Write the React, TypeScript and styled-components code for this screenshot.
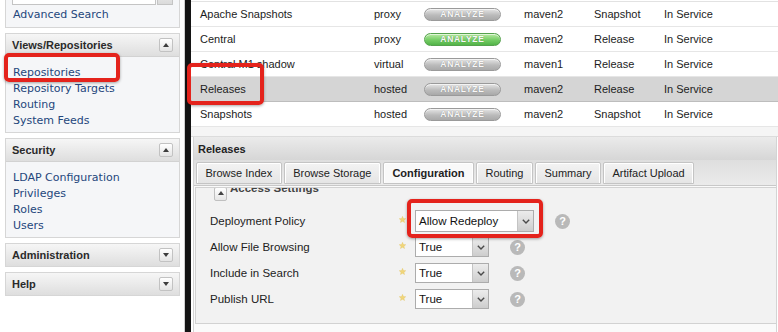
import React from "react";
import styled, { createGlobalStyle, css } from "styled-components";

const GlobalStyle = createGlobalStyle`
  html, body { margin: 0; padding: 0; background: #fff; }
  body { font-family: "Liberation Sans", Arial, sans-serif; }
  * { box-sizing: border-box; }
`;

const Page = styled.div`
  position: relative;
  display: flex;
  width: 778px;
  height: 332px;
  overflow: hidden;
  background: #fff;
`;

/* ---------- Sidebar ---------- */
const Sidebar = styled.aside`
  width: 185px;
  flex: none;
  border-right: 1px solid #cfcfcf;
  background: #fff;
  overflow: hidden;
  padding: 0 4px 0 5px;
`;

const SidebarStack = styled.div`
  display: flex;
  flex-direction: column;
  gap: 5px;
  margin-top: -22px;
`;

const Panel = styled.section`
  border: 1px solid #d6d6d6;
  background: #f5f6f8;
`;

const SearchPanel = styled(Panel)`
  padding: 8px 0 4px 6px;
  display: flex;
  flex-direction: column;
  gap: 2px;
`;

const SearchRow = styled.div`
  display: flex;
  gap: 1px;
`;

const SearchInput = styled.div`
  width: 144px;
  height: 18px;
  background: #fff;
  border: 1px solid #c4c4c4;
`;

const SearchButton = styled.div`
  width: 16px;
  height: 18px;
  border: 1px solid #c4c4c4;
  background: linear-gradient(#f2f2f2, #dadada);
`;

const PanelHeader = styled.div<{ $open?: boolean }>`
  height: ${(p) => (p.$open ? 23 : 22)}px;
  display: flex;
  align-items: center;
  justify-content: space-between;
  padding: 0 6px;
  background: linear-gradient(#f6f6f6, #dedede);
  ${(p) =>
    p.$open &&
    css`
      border-bottom: 1px solid #d2d2d2;
    `}
  font: bold 11px "Liberation Sans", Arial, sans-serif;
  color: #2a2a2a;
`;

const Toggle = styled.span<{ $dir: "up" | "down" }>`
  width: 14px;
  height: 14px;
  border: 1px solid #c2c2c2;
  border-radius: 2px;
  background: linear-gradient(#ffffff, #e4e4e4);
  display: grid;
  place-items: center;
  &::after {
    content: "";
    width: 0;
    height: 0;
    border-left: 3.5px solid transparent;
    border-right: 3.5px solid transparent;
    ${(p) =>
      p.$dir === "up"
        ? css`
            border-bottom: 4px solid #3d3d3d;
          `
        : css`
            border-top: 4px solid #3d3d3d;
          `}
  }
`;

const PanelBody = styled.div`
  padding: 8px 0 3px 0;
  display: flex;
  flex-direction: column;
`;

const NavLink = styled.a`
  display: block;
  padding-left: 7px;
  font: 11px "DejaVu Sans", Verdana, sans-serif;
  line-height: 16px;
  color: #24467c;
  text-decoration: none;
`;

const SearchLink = styled(NavLink)`
  padding-left: 1px;
`;

/* ---------- Divider ---------- */
const Divider = styled.div`
  width: 6px;
  flex: none;
  background: #141414;
`;

/* ---------- Main ---------- */
const Main = styled.main`
  flex: 1;
  min-width: 0;
  display: flex;
  flex-direction: column;
  background: #fff;
`;

const RepoTable = styled.div`
  margin-top: 1px;
  border-top: 1px solid #e2e2e2;
`;

const RepoRow = styled.div<{ $selected?: boolean }>`
  display: grid;
  grid-template-columns: 174px 50px 100px 70px 70px 1fr;
  align-items: center;
  height: 25px;
  padding-left: 9px;
  border-bottom: 1px solid ${(p) => (p.$selected ? "#bdbdbd" : "#e6e6e6")};
  background: ${(p) => (p.$selected ? "#d5d5d5" : "#fff")};
  font: 11px "Liberation Sans", Arial, sans-serif;
  color: #1c1c1c;
`;

const Cell = styled.span`
  white-space: nowrap;
`;

const AnalyzePill = styled.span<{ $active?: boolean }>`
  display: inline-flex;
  align-items: center;
  justify-content: center;
  width: 77px;
  height: 13px;
  border-radius: 7px;
  font: bold 8.5px "Liberation Sans", Arial, sans-serif;
  letter-spacing: 0.7px;
  color: #f8f8f8;
  text-shadow: 0 0 1px rgba(0, 0, 0, 0.35);
  border: 1px solid ${(p) => (p.$active ? "#55a24d" : "#9a9a9a")};
  background: ${(p) =>
    p.$active
      ? "linear-gradient(#b8eba3, #74cc64 55%, #52b348)"
      : "linear-gradient(#e6e6e6, #bbbbbb 55%, #a9a9a9)"};
  box-shadow: inset 0 1px 0 rgba(255, 255, 255, 0.6);
`;

const Gap = styled.div`
  height: 10px;
  background: #f5f5f5;
  border-bottom: 1px solid #dcdcdc;
`;

const DetailPanel = styled.section`
  flex: 1;
  display: flex;
  flex-direction: column;
  margin: 0 1px 0 2px;
  border-right: 1px solid #d4d4d4;
  border-left: 1px solid #d4d4d4;
  background: #fafafa;
  min-height: 0;
`;

const DetailHeader = styled.div`
  height: 23px;
  flex: none;
  display: flex;
  align-items: center;
  padding-left: 4px;
  background: linear-gradient(#ebebeb, #d6d6d6);
  font: bold 11px "Liberation Sans", Arial, sans-serif;
  color: #222;
`;

const TabStrip = styled.div`
  height: 26px;
  flex: none;
  display: flex;
  align-items: flex-end;
  gap: 2px;
  padding: 0 0 1px 2px;
  background: linear-gradient(#dedede, #ebebeb);
  border-bottom: 1px solid #c8c8c8;
`;

const Tab = styled.div<{ $active?: boolean }>`
  height: 22px;
  display: flex;
  align-items: center;
  padding: 0 8.5px;
  border: 1px solid #c4c4c4;
  border-radius: 2px 2px 0 0;
  box-shadow: inset 1px 1px 0 #fff, inset -1px 0 0 #fff;
  background: ${(p) =>
    p.$active ? "#f9f9f9" : "linear-gradient(#f3f3f3, #e5e5e5)"};
  font: ${(p) => (p.$active ? "bold" : "normal")} 11px "Liberation Sans", Arial,
    sans-serif;
  color: #222;
  white-space: nowrap;
`;

const FormViewport = styled.div`
  flex: 1;
  overflow: hidden;
  margin: 1px 0 8px 1px;
  border: 1px solid #d2d2d2;
  border-right: none;
  background: #f2f2f2;
`;

const Fieldset = styled.div`
  margin-top: -12px;
  padding-left: 14px;
  display: flex;
  flex-direction: column;
`;

const LegendRow = styled.div`
  height: 24px;
  display: flex;
  align-items: center;
  gap: 3px;
  padding-left: 4px;
  margin-bottom: 8px;
  font: bold 11.5px "Liberation Sans", Arial, sans-serif;
  color: #444;
`;

const LegendButton = styled.span`
  width: 13px;
  height: 14px;
  margin-top: 12px;
  border: 1px solid #c0c0c0;
  border-radius: 2px;
  background: linear-gradient(#ffffff, #e6e6e6);
  display: grid;
  place-items: start center;
  padding-top: 3px;
  &::after {
    content: "";
    border-left: 3px solid transparent;
    border-right: 3px solid transparent;
    border-bottom: 4px solid #444;
  }
`;

const FormRow = styled.div`
  height: 26px;
  display: flex;
  align-items: center;
`;

const FieldLabel = styled.label`
  width: 189px;
  flex: none;
  font: 11.5px "Liberation Sans", Arial, sans-serif;
  color: #222;
`;

const Star = styled.svg`
  width: 7px;
  height: 7px;
  margin-right: 9px;
  transform: translateY(-2px);
  flex: none;
`;

const Select = styled.div<{ $width: number; $height: number }>`
  width: ${(p) => p.$width}px;
  height: ${(p) => p.$height}px;
  flex: none;
  display: flex;
  border: 1px solid #acacac;
  background: #fff;
  font: 11.5px "Liberation Sans", Arial, sans-serif;
  color: #111;
`;

const SelectValue = styled.span`
  flex: 1;
  display: flex;
  align-items: center;
  padding-left: 3px;
`;

const SelectArrow = styled.span`
  width: 16px;
  flex: none;
  display: grid;
  place-items: center;
  border-left: 1px solid #c4c4c4;
  background: linear-gradient(#ececec, #cdcdcd);
`;

const HelpIcon = styled.span`
  width: 15px;
  height: 15px;
  margin-left: 21px;
  border-radius: 50%;
  background: #b9b9b9;
  color: #fff;
  display: grid;
  place-items: center;
  font: bold 11px "Liberation Sans", Arial, sans-serif;
`;

const Highlight = styled.div<{ $x: number; $y: number; $w: number; $h: number }>`
  position: absolute;
  left: ${(p) => p.$x}px;
  top: ${(p) => p.$y}px;
  width: ${(p) => p.$w}px;
  height: ${(p) => p.$h}px;
  border: 4px solid #e4231c;
  border-radius: 5px;
  box-shadow: 0 1px 3px rgba(0, 0, 0, 0.35);
  pointer-events: none;
`;

/* ---------- data ---------- */
const repos = [
  { name: "Apache Snapshots", type: "proxy", active: false, format: "maven2", policy: "Snapshot" },
  { name: "Central", type: "proxy", active: true, format: "maven2", policy: "Release" },
  { name: "Central M1 shadow", type: "virtual", active: false, format: "maven1", policy: "Release" },
  { name: "Releases", type: "hosted", active: false, format: "maven2", policy: "Release", selected: true },
  { name: "Snapshots", type: "hosted", active: false, format: "maven2", policy: "Snapshot" },
];

const tabs = ["Browse Index", "Browse Storage", "Configuration", "Routing", "Summary", "Artifact Upload"];

const fields = [
  { label: "Deployment Policy", value: "Allow Redeploy", width: 119, height: 22 },
  { label: "Allow File Browsing", value: "True", width: 74, height: 20 },
  { label: "Include in Search", value: "True", width: 74, height: 20 },
  { label: "Publish URL", value: "True", width: 74, height: 20 },
];

const StarIcon = () => (
  <Star viewBox="0 0 10 10">
    <path
      d="M5 0.4 L6.3 3.6 L9.7 3.8 L7.1 6 L7.9 9.4 L5 7.6 L2.1 9.4 L2.9 6 L0.3 3.8 L3.7 3.6 Z"
      fill="#f1d67a"
      stroke="#e2c35e"
      strokeWidth="0.5"
    />
  </Star>
);

const Chevron = () => (
  <svg width="8" height="5" viewBox="0 0 8 5">
    <path d="M0.8 0.8 L4 4 L7.2 0.8" fill="none" stroke="#4a4a4a" strokeWidth="1.4" />
  </svg>
);

export default function App() {
  return (
    <>
      <GlobalStyle />
      <Page>
        <Sidebar>
          <SidebarStack>
            <SearchPanel>
              <SearchRow>
                <SearchInput />
                <SearchButton />
              </SearchRow>
              <SearchLink>Advanced Search</SearchLink>
            </SearchPanel>
            <Panel>
              <PanelHeader $open>
                Views/Repositories
                <Toggle $dir="up" />
              </PanelHeader>
              <PanelBody>
                <NavLink>Repositories</NavLink>
                <NavLink>Repository Targets</NavLink>
                <NavLink>Routing</NavLink>
                <NavLink>System Feeds</NavLink>
              </PanelBody>
            </Panel>
            <Panel>
              <PanelHeader $open>
                Security
                <Toggle $dir="up" />
              </PanelHeader>
              <PanelBody>
                <NavLink>LDAP Configuration</NavLink>
                <NavLink>Privileges</NavLink>
                <NavLink>Roles</NavLink>
                <NavLink>Users</NavLink>
              </PanelBody>
            </Panel>
            <Panel>
              <PanelHeader>
                Administration
                <Toggle $dir="down" />
              </PanelHeader>
            </Panel>
            <Panel>
              <PanelHeader>
                Help
                <Toggle $dir="down" />
              </PanelHeader>
            </Panel>
          </SidebarStack>
        </Sidebar>
        <Divider />
        <Main>
          <RepoTable>
            {repos.map((r) => (
              <RepoRow key={r.name} $selected={r.selected}>
                <Cell>{r.name}</Cell>
                <Cell>{r.type}</Cell>
                <Cell>
                  <AnalyzePill $active={r.active}>ANALYZE</AnalyzePill>
                </Cell>
                <Cell>{r.format}</Cell>
                <Cell>{r.policy}</Cell>
                <Cell>In Service</Cell>
              </RepoRow>
            ))}
          </RepoTable>
          <Gap />
          <DetailPanel>
            <DetailHeader>Releases</DetailHeader>
            <TabStrip>
              {tabs.map((t) => (
                <Tab key={t} $active={t === "Configuration"}>
                  {t}
                </Tab>
              ))}
            </TabStrip>
            <FormViewport>
              <Fieldset>
                <LegendRow>
                  <LegendButton />
                  Access Settings
                </LegendRow>
                {fields.map((f) => (
                  <FormRow key={f.label}>
                    <FieldLabel>{f.label}</FieldLabel>
                    <StarIcon />
                    <Select $width={f.width} $height={f.height}>
                      <SelectValue>{f.value}</SelectValue>
                      <SelectArrow>
                        <Chevron />
                      </SelectArrow>
                    </Select>
                    <HelpIcon>?</HelpIcon>
                  </FormRow>
                ))}
              </Fieldset>
            </FormViewport>
          </DetailPanel>
        </Main>
        <Highlight $x={4} $y={53} $w={116} $h={29} />
        <Highlight $x={187} $y={63} $w={77} $h={42} />
        <Highlight $x={407} $y={199} $w={136} $h={39} />
      </Page>
    </>
  );
}
